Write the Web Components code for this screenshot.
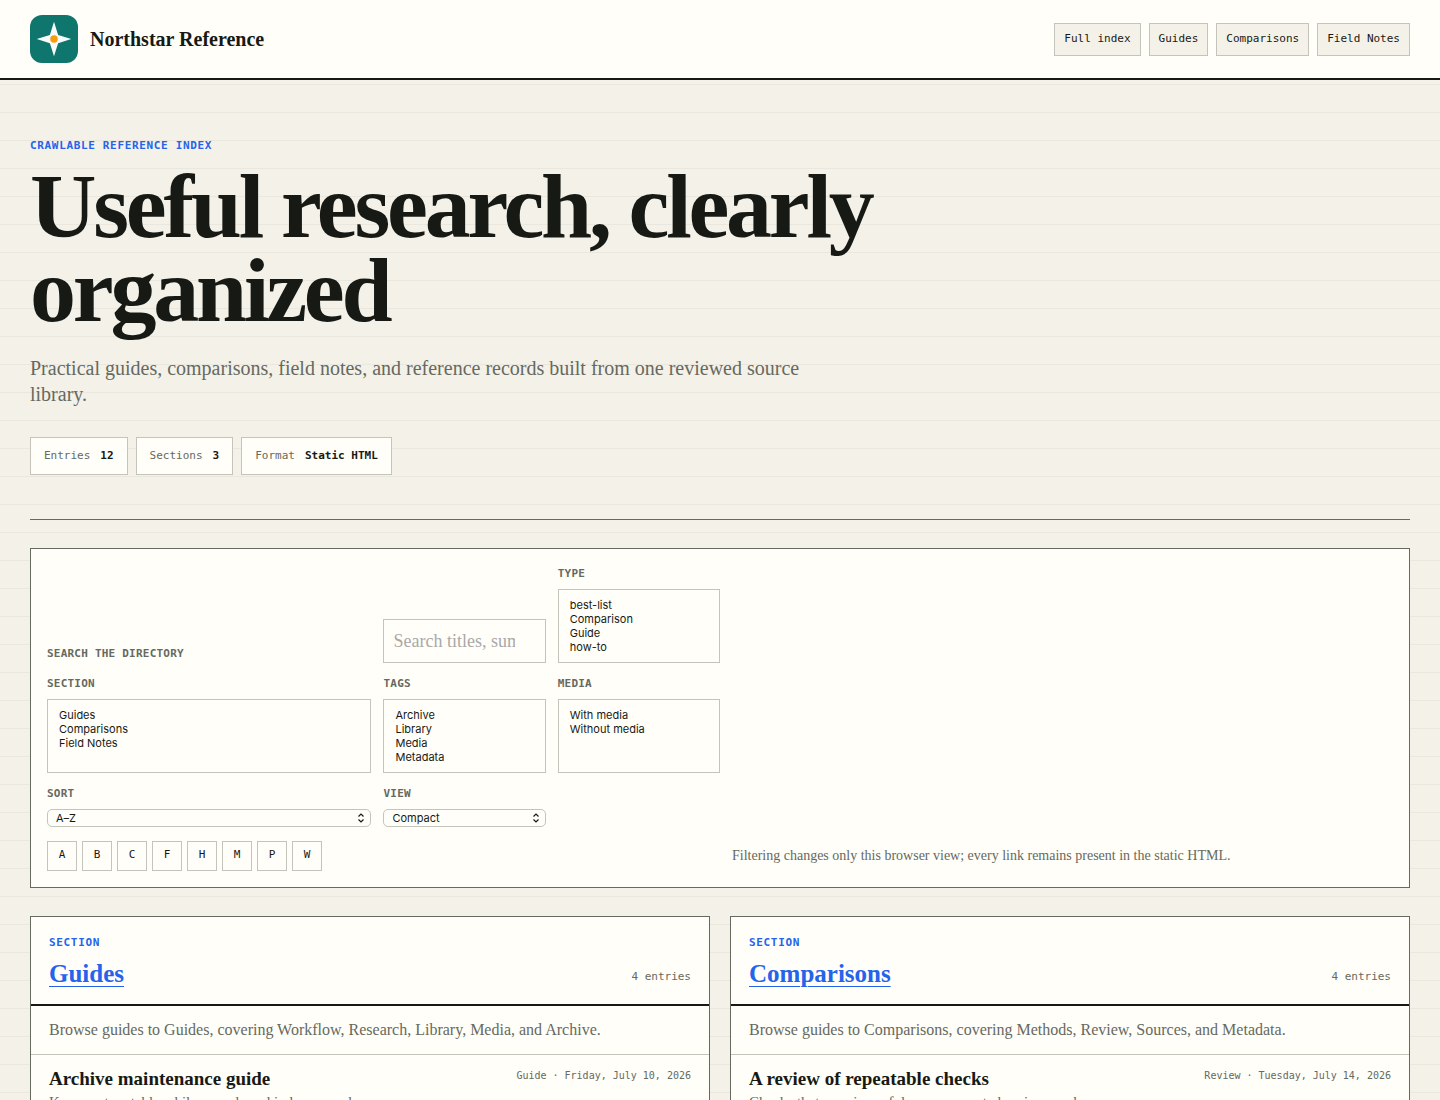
<!DOCTYPE html>
<html lang="en">
<head>
<meta charset="utf-8">
<meta name="viewport" content="width=device-width, initial-scale=1">
<title>Northstar Reference</title>
<style>
  :root {
    --ink: #171914;
    --muted: #666960;
    --line: #c4c4bb;
    --paper: #fffef9;
    --canvas: #f4f1e9;
    --accent: #2563eb;
    --serif: "Liberation Serif", "Times New Roman", serif;
    --mono: "DejaVu Sans Mono", monospace;
    --ui: Inter, sans-serif;
  }
  body {
    margin: 0;
    color: var(--ink);
    font-family: var(--serif);
    background: repeating-linear-gradient(#eae7df 0 1px, transparent 1px 28px) var(--canvas);
  }
</style>
</head>
<body>
<reference-page></reference-page>

<script>
const define = (name, html, setup) => {
  const template = document.createElement('template');
  template.innerHTML = '<style>*{box-sizing:border-box}</style>' + html;
  customElements.define(name, class extends HTMLElement {
    constructor() {
      super();
      this.attachShadow({ mode: 'open' }).append(template.content.cloneNode(true));
    }
    connectedCallback() { if (setup) setup(this, this.shadowRoot); }
  });
};

define('brand-mark', `
  <style>
    :host { display: block; }
    a { display: flex; align-items: center; gap: 12px; color: inherit; text-decoration: none; font: bold 20px/24px var(--serif); }
    svg { display: block; width: 48px; height: 48px; }
  </style>
  <a href="#"><svg viewBox="0 0 64 64" aria-hidden="true">
    <rect width="64" height="64" rx="16" fill="#0f766e"/>
    <path d="M32 9l5.500 17.500L55 32l-17.500 5.500L32 55l-5.500-17.500L9 32l17.500-5.500z" fill="#f8fafc"/>
    <circle cx="32" cy="32" r="5" fill="#f59e0b"/>
  </svg><slot></slot></a>`);

define('nav-link', `
  <style>
    :host { display: block; }
    a { display: block; padding: 6px 9px 8px; border: 1px solid var(--line); background: var(--canvas); color: var(--ink); text-decoration: none; font: 11px/17px var(--mono); }
  </style>
  <a href="#"><slot></slot></a>`);

define('site-header', `
  <style>
    :host { display: block; }
    header { display: flex; align-items: center; justify-content: space-between; padding: 15px 30px; background: var(--paper); border-bottom: 2px solid var(--ink); }
    nav { display: flex; gap: 8px; }
  </style>
  <header>
    <brand-mark>Northstar Reference</brand-mark>
    <nav aria-label="Main">
      <nav-link>Full index</nav-link><nav-link>Guides</nav-link><nav-link>Comparisons</nav-link><nav-link>Field Notes</nav-link>
    </nav>
  </header>`);

define('eye-brow', `
  <style>
    :host { display: block; color: var(--accent); font: bold 11px/16px var(--mono); letter-spacing: .06em; text-transform: uppercase; }
  </style><slot></slot>`);

define('stat-chip', `
  <style>
    :host { display: flex; gap: 10px; padding: 9px 13px; border: 1px solid var(--line); background: var(--paper); color: var(--muted); font: 11px/18px var(--mono); }
    b { color: var(--ink); }
  </style><span><slot></slot></span><b><slot name="value"></slot></b>`);

define('page-hero', `
  <style>
    :host { display: block; }
    section { padding: 58px 0 44px; border-bottom: 1px solid var(--muted); }
    h1 { max-width: 900px; margin: 10px 0 23px; font-size: 92px; line-height: 84px; letter-spacing: -.035em; }
    p { max-width: 780px; margin: 0 0 30px; color: var(--muted); font-size: 20px; line-height: 26px; }
    div { display: flex; flex-wrap: wrap; gap: 8px; }
  </style>
  <section>
    <eye-brow>Crawlable reference index</eye-brow>
    <h1>Useful research, clearly organized</h1>
    <p>Practical guides, comparisons, field notes, and reference records built from one reviewed source library.</p>
    <div>
      <stat-chip>Entries<span slot="value">12</span></stat-chip>
      <stat-chip>Sections<span slot="value">3</span></stat-chip>
      <stat-chip>Format<span slot="value">Static HTML</span></stat-chip>
    </div>
  </section>`);

define('select-field', `
  <style>
    :host { display: block; min-width: 0; }
    label { display: grid; gap: 6px; color: var(--muted); font: bold 11px/18px var(--mono); letter-spacing: .02em; text-transform: uppercase; }
    .box { display: grid; position: relative; }
    select { appearance: none; width: 100%; margin: 0; border: 1px solid var(--line); border-radius: 0; background: var(--paper); color: var(--ink); font: 11px/14px var(--ui); outline: 0; }
    select[multiple] { height: 74px; padding: 8px; overflow: hidden; scrollbar-width: none; }
    select[multiple] option { display: block; height: 14px; min-height: 14px; padding: 0 3px; line-height: 14px; overflow: visible; }
    select:not([multiple]) { height: 18px; padding: 0 8px; border-radius: 5px; }
    svg { position: absolute; right: 6px; top: 4px; width: 8px; height: 10px; fill: none; stroke: var(--ink); stroke-width: 1.2; pointer-events: none; }
    :host([multiple]) svg { display: none; }
  </style>
  <label><span></span><span class="box"><select></select><svg viewBox="0 0 8 10" aria-hidden="true"><path d="M1.500 3.500L4 1l2.500 2.500M1.500 6.500L4 9l2.500-2.500"/></svg></span></label>`,
  (host, root) => {
    root.querySelector('label > span').textContent = host.getAttribute('label');
    const select = root.querySelector('select');
    if (host.hasAttribute('multiple')) { select.multiple = true; select.size = 4; }
    select.replaceChildren(...host.getAttribute('options').split('|').map(t => new Option(t)));
    if (!select.multiple) select.selectedIndex = 0;
  });

define('filter-panel', `
  <style>
    :host { display: block; margin: 28px 0; }
    form { display: grid; grid-template-columns: 162fr 81fr 81fr 330fr; gap: 12px; align-items: end; padding: 16px; border: 1px solid var(--muted); background: var(--paper); }
    .search { color: var(--muted); font: bold 11px/18px var(--mono); letter-spacing: .02em; text-transform: uppercase; }
    input { appearance: none; width: 100%; min-width: 0; height: 44px; padding: 0 14px 0 9px; border: 1px solid var(--line); border-radius: 0; background: var(--paper); color: var(--ink); font: 18px/24px var(--serif); outline: 0; }
    input::placeholder { color: #a9a9a9; opacity: 1; }
    .row { grid-column: 1; }
    .letters { grid-column: 1 / 4; display: flex; gap: 5px; padding-top: 2px; }
    button { width: 30px; height: 30px; padding: 0 0 3px; border: 1px solid var(--line); background: var(--paper); color: var(--ink); font: 11px/16px var(--mono); }
    p { margin: 0; padding-bottom: 4px; color: var(--muted); font-size: 14px; line-height: 22px; }
  </style>
  <form>
    <label class="search" for="q">Search the directory</label>
    <input id="q" type="search" placeholder="Search titles, summaries, tags">
    <select-field multiple label="Type" options="best-list|Comparison|Guide|how-to"></select-field>
    <select-field class="row" multiple label="Section" options="Guides|Comparisons|Field Notes"></select-field>
    <select-field multiple label="Tags" options="Archive|Library|Media|Metadata"></select-field>
    <select-field multiple label="Media" options="With media|Without media"></select-field>
    <select-field class="row" label="Sort" options="A–Z|Z–A"></select-field>
    <select-field label="View" options="Compact|Expanded"></select-field>
    <div class="letters">
      <button type="button">A</button><button type="button">B</button><button type="button">C</button><button type="button">F</button><button type="button">H</button><button type="button">M</button><button type="button">P</button><button type="button">W</button>
    </div>
    <p>Filtering changes only this browser view; every link remains present in the static HTML.</p>
  </form>`);

define('entry-row', `
  <style>
    :host { display: block; padding: 12px 18px 16px; }
    div { display: flex; justify-content: space-between; gap: 16px; }
    h3 { margin: 0; font-size: 19px; line-height: 24px; }
    a { color: inherit; text-decoration: none; }
    small { color: var(--muted); font: 10px/18px var(--mono); }
    p { margin: 0; color: var(--muted); font-size: 15px; line-height: 22px; }
  </style>
  <div><h3><a href="#"><slot name="title"></slot></a></h3><small><slot name="meta"></slot></small></div>
  <p><slot></slot></p>`);

define('section-card', `
  <style>
    :host { display: block; min-width: 0; border: 1px solid var(--muted); background: var(--paper); }
    header { display: flex; justify-content: space-between; align-items: end; padding: 18px 18px 14px; border-bottom: 2px solid var(--ink); }
    h2 { margin: 7px 0 0; font-size: 25px; line-height: 32px; }
    h2 a { color: var(--accent); text-decoration-thickness: 1px; text-underline-offset: 4px; }
    small { color: var(--muted); font: 11px/16px var(--mono); padding-bottom: 5px; }
    .about { margin: 0; padding: 12px 18px; border-bottom: 1px solid var(--line); color: var(--muted); font-size: 16px; line-height: 24px; }
  </style>
  <header><div><eye-brow>Section</eye-brow><h2><a href="#"><slot name="name"></slot></a></h2></div><small>4 entries</small></header>
  <p class="about"><slot name="about"></slot></p>
  <slot></slot>`);

define('section-grid', `
  <style>
    :host { display: grid; grid-template-columns: 1fr 1fr; gap: 20px; padding-bottom: 28px; }
  </style>
  <section-card>
    <span slot="name">Guides</span>
    <span slot="about">Browse guides to Guides, covering Workflow, Research, Library, Media, and Archive.</span>
    <entry-row><span slot="title">Archive maintenance guide</span><span slot="meta">Guide · Friday, July 10, 2026</span>Keep routes stable while records and indexes need</entry-row>
  </section-card>
  <section-card>
    <span slot="name">Comparisons</span>
    <span slot="about">Browse guides to Comparisons, covering Methods, Review, Sources, and Metadata.</span>
    <entry-row><span slot="title">A review of repeatable checks</span><span slot="meta">Review · Tuesday, July 14, 2026</span>Checks that remain useful across repeated reviews and</entry-row>
  </section-card>`);

define('reference-page', `
  <style>
    :host { display: block; }
    main { padding: 0 30px; }
  </style>
  <site-header></site-header>
  <main><page-hero></page-hero><filter-panel></filter-panel><section-grid></section-grid></main>`);
</script>
</body>
</html>
